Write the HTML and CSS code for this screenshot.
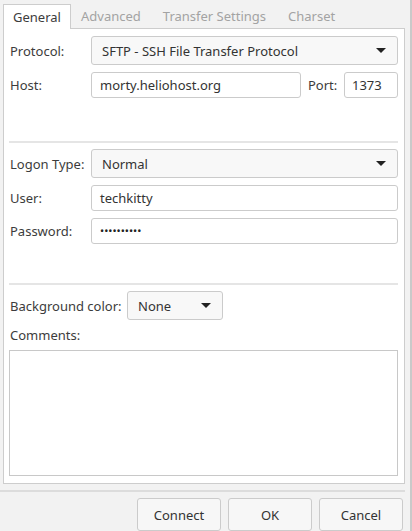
FILE: index.html
```html
<!DOCTYPE html>
<html>
<head>
<meta charset="utf-8">
<link rel="stylesheet" href="styles.css">
</head>
<body>
<div class="window">
  <div class="main">
    <div class="tabs">
      <div class="tab active">General</div>
      <div class="tab">Advanced</div>
      <div class="tab">Transfer Settings</div>
      <div class="tab">Charset</div>
    </div>
    <div class="panel">
      <div class="row r-protocol">
        <div class="label">Protocol:</div>
        <div class="combo grow"><span>SFTP - SSH File Transfer Protocol</span><span class="arrow"></span></div>
      </div>
      <div class="row r-host">
        <div class="label">Host:</div>
        <div class="input grow">morty.heliohost.org</div>
        <div class="port-label">Port:</div>
        <div class="input port">1373</div>
      </div>
      <div class="sep sep1"></div>
      <div class="row r-logon">
        <div class="label">Logon Type:</div>
        <div class="combo grow"><span>Normal</span><span class="arrow"></span></div>
      </div>
      <div class="row r-user">
        <div class="label">User:</div>
        <div class="input grow">techkitty</div>
      </div>
      <div class="row r-pass">
        <div class="label">Password:</div>
        <div class="input grow dots">••••••••••</div>
      </div>
      <div class="sep sep2"></div>
      <div class="row r-bg">
        <div class="label-auto">Background color:</div>
        <div class="combo small"><span>None</span><span class="arrow"></span></div>
      </div>
      <div class="comments-label">Comments:</div>
      <div class="textarea"></div>
    </div>
    <div class="bottom-sep"></div>
    <div class="buttons">
      <div class="btn">Connect</div>
      <div class="btn">OK</div>
      <div class="btn">Cancel</div>
    </div>
  </div>
  <div class="edge"></div>
</div>
</body>
</html>
```
FILE: styles.css
```css
html, body {
  margin: 0;
  padding: 0;
}
body {
  width: 412px;
  height: 531px;
  overflow: hidden;
  background: #f2f2f2;
  font-family: "Noto Sans", "DejaVu Sans", sans-serif;
  font-size: 13px;
  color: #3c3c3c;
}
.window {
  display: flex;
  height: 531px;
}
.main {
  width: 405px;
  display: flex;
  flex-direction: column;
}
.edge {
  margin-left: 5px;
  width: 2px;
  background: #c9c9c9;
}
.tabs {
  display: flex;
  padding: 4px 0 0 3px;
  height: 24px;
}
.tab {
  padding: 0 10px;
  line-height: 24px;
  color: #a3a3a3;
  margin-right: 2px;
}
.tab.active {
  color: #3c3c3c;
  background: #fff;
  border: 1px solid #cdcdcd;
  border-bottom: none;
  margin-bottom: -1px;
  position: relative;
  z-index: 1;
  padding: 0 9px;
  width: 48px;
  margin-right: 0;
}
.panel {
  margin-left: 3px;
  width: 389px;
  height: 451px;
  background: #fff;
  border: 1px solid #cdcdcd;
  padding: 7px 6px 0 5px;
  box-sizing: content-box;
  display: flex;
  flex-direction: column;
}
.row {
  display: flex;
  align-items: center;
}
.label {
  width: 81px;
  padding-left: 1px;
}
.label-auto {
  padding-left: 1px;
  width: 117px;
}
.grow {
  flex: 1;
}
.combo {
  height: 27px;
  border: 1px solid #cbcbcb;
  border-radius: 3px;
  background: #f8f8f8;
  display: flex;
  align-items: center;
  justify-content: space-between;
  padding: 0 11px 0 10px;
  color: #333;
}
.combo.small {
  width: 73px;
}
.arrow {
  width: 0;
  height: 0;
  border-left: 5px solid transparent;
  border-right: 5px solid transparent;
  border-top: 5px solid #222;
}
.input {
  height: 24px;
  line-height: 24px;
  border: 1px solid #cbcbcb;
  border-radius: 3px;
  background: #fff;
  padding-left: 8px;
  color: #333;
}
.port-label {
  margin-left: 7px;
  width: 36px;
}
.port {
  flex: none;
  width: 45px;
  padding-left: 7px;
}
.dots {
  font-size: 11px;
  letter-spacing: 0;
  color: #222;
}
.r-host { margin-top: 7px; }
.sep {
  height: 2px;
  background: #e5e5e5;
}
.sep1 { margin-top: 43px; margin-bottom: 6px; }
.r-user { margin-top: 7px; }
.r-pass { margin-top: 7px; }
.sep2 { margin-top: 39px; margin-bottom: 6px; }
.comments-label {
  margin-top: 6px;
  padding-left: 1px;
  line-height: 18px;
}
.textarea {
  margin-top: 6px;
  height: 124px;
  border: 1px solid #c8c8c8;
}
.bottom-sep {
  margin-top: 6px;
  height: 2px;
  background: #dcdcdc;
}
.buttons {
  display: flex;
  justify-content: flex-end;
  gap: 7px;
  padding: 6px 2px 0 0;
}
.btn {
  width: 82px;
  height: 31px;
  border: 1px solid #cbcbcb;
  border-radius: 3px;
  background: #f7f7f7;
  display: flex;
  align-items: center;
  justify-content: center;
  color: #333;
}
```
